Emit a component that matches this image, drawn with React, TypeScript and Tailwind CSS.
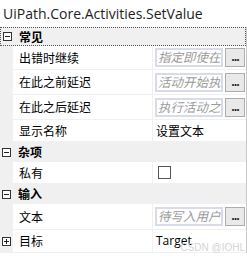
import type { ReactNode } from "react";

const cjk = "font-['Noto_Sans_CJK_SC','Noto_Sans',sans-serif]";

function Header({
  label,
  focused,
  height,
}: {
  label: string;
  focused?: boolean;
  height: string;
}) {
  return (
    <div
      className={`flex items-center bg-[#f0f0f0] ${height} ${
        focused ? "border border-dotted border-[#555]" : ""
      }`}
    >
      <div className="flex w-[13px] shrink-0 justify-center">
        <div className="flex h-[9px] w-[9px] items-center justify-center border border-[#333] bg-white">
          <div className="h-px w-[5px] bg-[#222]" />
        </div>
      </div>
      <div className="pl-[5px] text-[12px] font-bold leading-none text-black">
        {label}
      </div>
    </div>
  );
}

function Row({
  name,
  height,
  expander,
  children,
}: {
  name: string;
  height: string;
  expander?: boolean;
  children?: ReactNode;
}) {
  return (
    <div className={`flex ${height}`}>
      <div className="flex w-[13px] shrink-0 items-center justify-center bg-[#f0f0f0]">
        {expander && (
          <div className="relative flex h-[9px] w-[9px] items-center justify-center border border-[#333] bg-white">
            <div className="h-px w-[5px] bg-[#222]" />
            <div className="absolute h-[5px] w-px bg-[#222]" />
          </div>
        )}
      </div>
      <div className="flex w-[139px] shrink-0 items-center border-b border-[#f0f0f0] pl-[6px] text-[12px] text-black">
        {name}
      </div>
      <div className="flex flex-1 items-center border-b border-l border-[#f0f0f0] pl-[2px] text-[12px] text-black">
        {children}
      </div>
    </div>
  );
}

function Field({ hint }: { hint: string }) {
  return (
    <div className="flex items-center">
      <div className="flex h-[19px] w-[68px] items-center overflow-hidden whitespace-nowrap border-2 border-[#d7dce8] bg-white pl-[1px] text-[12.5px] italic text-[#9a9a9a]">
        {hint}
      </div>
      <div className="ml-[2px] flex h-[19px] w-[20px] items-end justify-center border border-[#adadad] bg-[#e9e9e9] pb-[4px] text-[11px] font-bold leading-none tracking-[-1px] text-[#222]">
        ...
      </div>
    </div>
  );
}

export default function App() {
  return (
    <div className={`relative h-[259px] w-[247px] overflow-hidden bg-white ${cjk}`}>
      <div className="flex h-[27px] items-center pl-[3px] font-['Open_Sans',sans-serif] text-[14px] text-[#1e1e1e]">
        UiPath.Core.Activities.SetValue
      </div>
      <div className="border-r border-[#c8c8c8]">
        <Header label="常见" focused height="h-[19px]" />
        <Row name="出错时继续" height="h-[24px]">
          <Field hint="指定即使在" />
        </Row>
        <Row name="在此之前延迟" height="h-[25px]">
          <Field hint="活动开始执" />
        </Row>
        <Row name="在此之后延迟" height="h-[25px]">
          <Field hint="执行活动之" />
        </Row>
        <Row name="显示名称" height="h-[22px]">
          <span className="pl-[1px]">设置文本</span>
        </Row>
        <Header label="杂项" height="h-[20px]" />
        <Row name="私有" height="h-[22px]">
          <div className="ml-[3px] h-[13px] w-[13px] border border-[#555] bg-white" />
        </Row>
        <Header label="输入" height="h-[20px]" />
        <Row name="文本" height="h-[26px]">
          <Field hint="待写入用户" />
        </Row>
        <Row name="目标" height="h-[23px]" expander>
          <span className="pl-[1px] font-['Open_Sans',sans-serif]">Target</span>
        </Row>
      </div>
      <div className="absolute bottom-[4px] right-[2px] font-['Liberation_Sans',sans-serif] text-[10px] text-[#d4d4d4]">
        CSDN @IOHL
      </div>
    </div>
  );
}
